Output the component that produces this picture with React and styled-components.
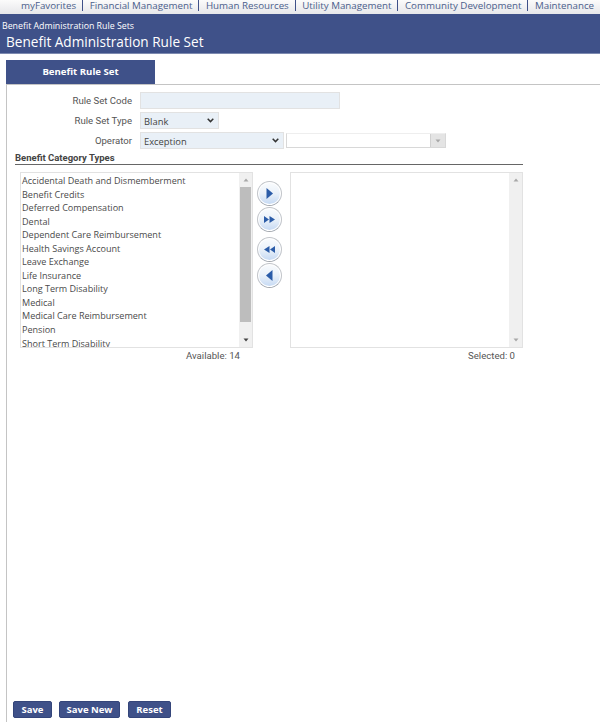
import styled, { createGlobalStyle } from "styled-components"

const GlobalStyle = createGlobalStyle`
  html, body { margin: 0; padding: 0; height: 100%; background: #fff; }
  body { font-family: "Open Sans", "Liberation Sans", sans-serif; color: #444; overflow: hidden; }
`

const Page = styled.div`
  height: 722px;
  display: flex;
  flex-direction: column;
  overflow: hidden;
`

const TopNav = styled.nav`
  height: 14px;
  flex: none;
  display: flex;
  align-items: flex-start;
  padding-left: 21px;
  background: linear-gradient(#fbfbfb, #e6e7ea);
  overflow: hidden;
  white-space: nowrap;
`

const NavItem = styled.span`
  font-size: 9.75px;
  line-height: 11px;
  color: #4c5f8c;
  padding-right: 6px;
  margin-right: 6.5px;
  border-right: ${(p) => (p.$last ? "none" : "1px solid #3f5189")};
`

const Header = styled.header`
  height: 40px;
  flex: none;
  background: #3f5189;
  border-bottom: 1px solid #7d8ab0;
  color: #fff;
  box-sizing: border-box;
  padding: 6px 0 0 2px;
`

const Crumb = styled.div`
  font-size: 8.8px;
  line-height: 13px;
`

const PageTitle = styled.div`
  font-size: 13.6px;
  line-height: 18px;
  padding-left: 4px;
`

const Body = styled.main`
  flex: 1;
  display: flex;
  flex-direction: column;
  padding: 6px 0 0 6px;
  min-height: 0;
`

const Tab = styled.div`
  width: 149px;
  height: 24px;
  flex: none;
  background: #3f5189;
  color: #fff;
  font-size: 9.6px;
  font-weight: 700;
  line-height: 24px;
  text-align: center;
`

const Panel = styled.section`
  flex: 1;
  display: flex;
  flex-direction: column;
  border-top: 1px solid #c4c4c4;
  border-left: 1px solid #c4c4c4;
  padding: 7px 0 0 8px;
  min-height: 0;
`

const FormGrid = styled.div`
  display: grid;
  grid-template-columns: 117px auto;
  column-gap: 8px;
  row-gap: 3px;
  justify-content: start;
  align-items: center;
`

const Label = styled.label`
  font-family: Roboto, sans-serif;
  font-size: 9.6px;
  color: #555;
  text-align: right;
`

const TextInput = styled.input`
  display: block;
  width: 200px;
  height: 17px;
  box-sizing: border-box;
  border: 1px solid #e2e2e2;
  background: #e9f0f7;
  padding: 0;
  outline: none;
`

const FieldRow = styled.div`
  display: flex;
  gap: 2px;
`

const SelectWrap = styled.div`
  position: relative;
  width: ${(p) => p.$width}px;
  height: 17px;
`

const Select = styled.select`
  display: block;
  appearance: none;
  width: 100%;
  height: 100%;
  box-sizing: border-box;
  border: 1px solid #e2e2e2;
  border-radius: 0;
  background-color: #e9f0f7;
  color: #444;
  font-family: "Open Sans", sans-serif;
  font-size: 9.4px;
  padding: 1px 0 0 3px;
`

const Chevron = styled.svg`
  position: absolute;
  right: 5px;
  top: 6px;
  pointer-events: none;
`

const Combo = styled.div`
  width: 160px;
  height: 15px;
  margin-top: 1px;
  box-sizing: border-box;
  border: 1px solid #d8d8d8;
  border-top-color: #eee;
  display: flex;
  justify-content: flex-end;
`

const ComboButton = styled.span`
  width: 14px;
  background: #e4e4e4;
  border-left: 1px solid #d0d0d0;
  display: flex;
  align-items: center;
  justify-content: center;
`

const SectionTitle = styled.h3`
  width: 508px;
  margin: 3px 0 0;
  box-sizing: border-box;
  font-family: Roboto, sans-serif;
  font-size: 9.5px;
  line-height: 12px;
  font-weight: 700;
  color: #444;
  border-bottom: 1px solid #666;
`

const Picker = styled.div`
  display: flex;
  margin: 7px 0 0 5px;
`

const Column = styled.div`
  width: 233px;
  display: flex;
  flex-direction: column;
`

const ListBox = styled.div`
  height: 176px;
  box-sizing: border-box;
  display: flex;
  border: 1px solid #e2e2e2;
  overflow: hidden;
`

const Items = styled.ul`
  flex: 1;
  margin: 0;
  padding: 1px 0 0 1px;
  list-style: none;
  overflow: hidden;
`

const Item = styled.li`
  font-size: 9.05px;
  line-height: 13.55px;
  white-space: nowrap;
  color: #4a4a4a;
`

const Scrollbar = styled.div`
  width: 13px;
  flex: none;
  background: #f0f0f0;
  display: flex;
  flex-direction: column;
  align-items: center;
  justify-content: space-between;
  padding: 4px 0;
  box-sizing: border-box;
`

const Thumb = styled.div`
  height: 135px;
  flex: none;
  align-self: stretch;
  margin: 4px 1px auto;
  background: #bdbdbd;
`

const Count = styled.div`
  font-family: Roboto, sans-serif;
  font-size: 9.6px;
  line-height: 15px;
  color: #555;
  text-align: right;
  padding-right: ${(p) => p.$inset}px;
`

const Mover = styled.div`
  width: 32px;
  padding: 9px 5px 0 0;
  display: flex;
  flex-direction: column;
  align-items: center;
`

const MoveButton = styled.button`
  width: 25px;
  height: 25px;
  flex: none;
  padding: 0;
  margin-top: ${(p) => (p.$gap ? "5px" : "1px")};
  border: 1px solid #c2c5ca;
  border-bottom-color: #a4a8ae;
  border-radius: 50%;
  background: linear-gradient(#fafcfe 0%, #eaf1f9 50%, #c3d8f3 100%);
  box-shadow: inset 0 0 0 1px #fff;
  display: flex;
  align-items: center;
  justify-content: center;
  &:first-child { margin-top: 0; }
`

const Footer = styled.footer`
  margin-top: auto;
  display: flex;
  padding-bottom: 4px;
  margin-left: -2px;
`

const ActionButton = styled.button`
  height: 17px;
  width: ${(p) => p.$width}px;
  margin-right: ${(p) => p.$gap}px;
  padding: 0;
  border: 1px solid #34457a;
  border-radius: 2px;
  background: #3f5189;
  color: #fff;
  font-family: "Open Sans", sans-serif;
  font-size: 9.5px;
  font-weight: 700;
`

const Arrow = ({ dark, up }) => (
  <svg width="6" height="6" viewBox="0 0 6 6">
    <path d={up ? "M3 1.5L5.5 4.5H.5z" : "M.5 1.5h5L3 4.5z"} fill={dark ? "#444" : "#a8a8a8"} />
  </svg>
)

const SelectField = ({ width, value }) => (
  <SelectWrap $width={width}>
    <Select defaultValue={value}>
      <option>{value}</option>
    </Select>
    <Chevron width="7" height="5" viewBox="0 0 7 5">
      <path d="M.7 .8L3.5 3.6L6.3 .8" fill="none" stroke="#333" strokeWidth="1.5" />
    </Chevron>
  </SelectWrap>
)

const RIGHT = "M4.5 2L11 7.5L4.5 13z"
const DOUBLE_RIGHT = "M2 4L7 7.5L2 11zM7.5 4L13 7.5L7.5 11z"
const DOUBLE_LEFT = "M13 4L8 7.5L13 11zM7.5 4L2 7.5L7.5 11z"
const LEFT = "M10.5 2L4 7.5L10.5 13z"

const MoveIcon = ({ d }) => (
  <svg width="15" height="15" viewBox="0 0 15 15">
    <path d={d} fill="#2b5ca8" />
  </svg>
)

const navItems = [
  "myFavorites",
  "Financial Management",
  "Human Resources",
  "Utility Management",
  "Community Development",
  "Maintenance",
]

const categories = [
  "Accidental Death and Dismemberment",
  "Benefit Credits",
  "Deferred Compensation",
  "Dental",
  "Dependent Care Reimbursement",
  "Health Savings Account",
  "Leave Exchange",
  "Life Insurance",
  "Long Term Disability",
  "Medical",
  "Medical Care Reimbursement",
  "Pension",
  "Short Term Disability",
]

const App = () => {
  return (
    <Page>
      <GlobalStyle />
      <TopNav>
        {navItems.map((item, i) => (
          <NavItem key={item} $last={i === navItems.length - 1}>{item}</NavItem>
        ))}
      </TopNav>
      <Header>
        <Crumb>Benefit Administration Rule Sets</Crumb>
        <PageTitle>Benefit Administration Rule Set</PageTitle>
      </Header>
      <Body>
        <Tab>Benefit Rule Set</Tab>
        <Panel>
          <FormGrid>
            <Label>Rule Set Code</Label>
            <TextInput />
            <Label>Rule Set Type</Label>
            <SelectField width={79} value="Blank" />
            <Label>Operator</Label>
            <FieldRow>
              <SelectField width={144} value="Exception" />
              <Combo>
                <ComboButton><Arrow /></ComboButton>
              </Combo>
            </FieldRow>
          </FormGrid>
          <SectionTitle>Benefit Category Types</SectionTitle>
          <Picker>
            <Column>
              <ListBox>
                <Items>
                  {categories.map((c) => <Item key={c}>{c}</Item>)}
                </Items>
                <Scrollbar>
                  <Arrow up />
                  <Thumb />
                  <Arrow dark />
                </Scrollbar>
              </ListBox>
              <Count $inset={13}>Available: 14</Count>
            </Column>
            <Mover>
              <MoveButton><MoveIcon d={RIGHT} /></MoveButton>
              <MoveButton><MoveIcon d={DOUBLE_RIGHT} /></MoveButton>
              <MoveButton $gap><MoveIcon d={DOUBLE_LEFT} /></MoveButton>
              <MoveButton><MoveIcon d={LEFT} /></MoveButton>
            </Mover>
            <Column>
              <ListBox>
                <Items />
                <Scrollbar>
                  <Arrow up />
                  <Arrow />
                </Scrollbar>
              </ListBox>
              <Count $inset={8}>Selected: 0</Count>
            </Column>
          </Picker>
          <Footer>
            <ActionButton $width={39} $gap={7}>Save</ActionButton>
            <ActionButton $width={61} $gap={8}>Save New</ActionButton>
            <ActionButton $width={43} $gap={0}>Reset</ActionButton>
          </Footer>
        </Panel>
      </Body>
    </Page>
  )
}

export default App
